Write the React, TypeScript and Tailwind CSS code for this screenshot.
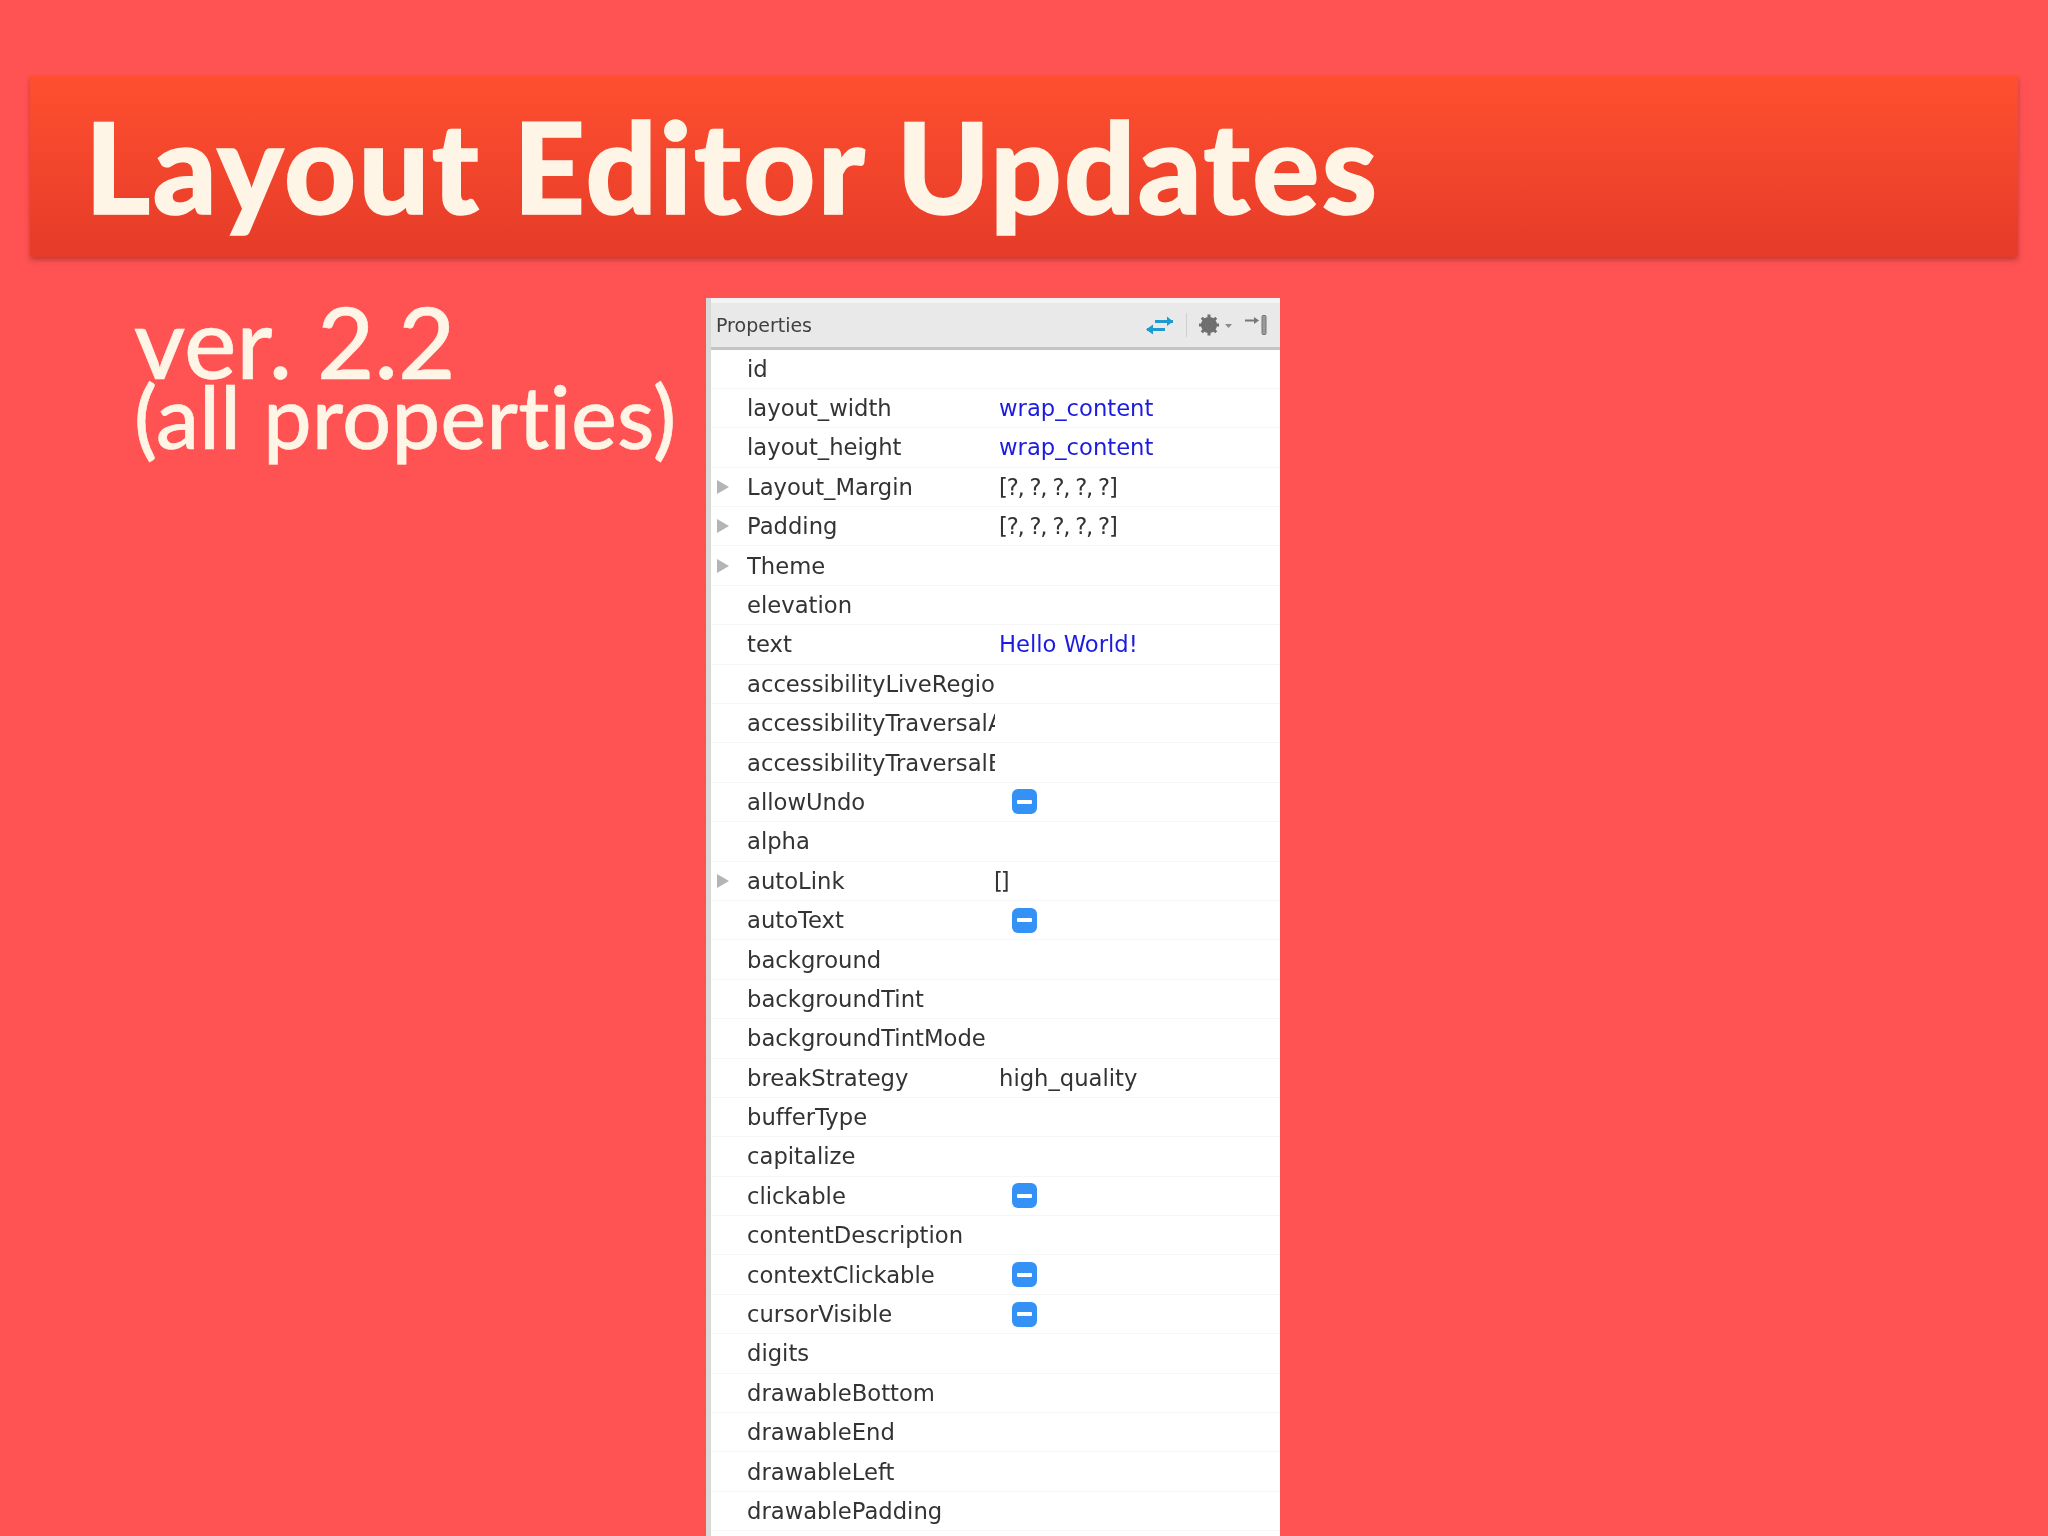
import React from 'react';

type Row = { name: string; value?: string; blue?: boolean; arrow?: boolean; check?: boolean; narrow?: boolean };

const rows: Row[] = [
  { name: 'id' },
  { name: 'layout_width', value: 'wrap_content', blue: true },
  { name: 'layout_height', value: 'wrap_content', blue: true },
  { name: 'Layout_Margin', value: '[?, ?, ?, ?, ?]', arrow: true, narrow: true },
  { name: 'Padding', value: '[?, ?, ?, ?, ?]', arrow: true, narrow: true },
  { name: 'Theme', arrow: true },
  { name: 'elevation' },
  { name: 'text', value: 'Hello World!', blue: true },
  { name: 'accessibilityLiveRegion' },
  { name: 'accessibilityTraversalAfter' },
  { name: 'accessibilityTraversalBefore' },
  { name: 'allowUndo', check: true },
  { name: 'alpha' },
  { name: 'autoLink', value: '[]', arrow: true },
  { name: 'autoText', check: true },
  { name: 'background' },
  { name: 'backgroundTint' },
  { name: 'backgroundTintMode' },
  { name: 'breakStrategy', value: 'high_quality' },
  { name: 'bufferType' },
  { name: 'capitalize' },
  { name: 'clickable', check: true },
  { name: 'contentDescription' },
  { name: 'contextClickable', check: true },
  { name: 'cursorVisible', check: true },
  { name: 'digits' },
  { name: 'drawableBottom' },
  { name: 'drawableEnd' },
  { name: 'drawableLeft' },
  { name: 'drawablePadding' },
];

function SwapIcon() {
  return (
    <svg width="30" height="22" viewBox="0 0 30 22" fill="none" stroke="#1f9ad0" strokeWidth="3">
      <path d="M10 7.5H28" />
      <path d="M22 2.5L28 7.5L22 12" fill="#1f9ad0" stroke="none" />
      <path d="M2 15.5H20" />
      <path d="M8 10.5L1 15.5L8 20.5Z" fill="#1f9ad0" stroke="none" />
    </svg>
  );
}

function GearIcon() {
  return (
    <svg width="36" height="24" viewBox="0 0 36 24" fill="#6f6f6f">
      <circle cx="11" cy="12" r="6" fill="none" stroke="#6f6f6f" strokeWidth="4" />
      <path d="M11 1.5V22.5M1 12H21M3.8 4.8L18.2 19.2M18.2 4.8L3.8 19.2" stroke="#6f6f6f" strokeWidth="3" />
      <path d="M27 11H34L30.5 15Z" fill="#8a8a8a" />
    </svg>
  );
}

function PinIcon() {
  return (
    <svg width="24" height="22" viewBox="0 0 24 22" fill="none">
      <path d="M1 6.5H11" stroke="#777" strokeWidth="2" />
      <path d="M10 3L15 6.5L10 10Z" fill="#777" />
      <rect x="18" y="1.5" width="4" height="19" rx="1" fill="#9a9a9a" stroke="#777" />
    </svg>
  );
}

function PropertyRow({ row }: { row: Row }) {
  const isEmptyList = row.value === '[]';
  return (
    <div className="flex h-[39.4px] shrink-0 items-center border-b border-[#f6f6f6] pl-[6px]">
      <div className="flex w-[30px] shrink-0 items-center">
        {row.arrow && <div className="h-0 w-0 border-y-[7px] border-l-[12px] border-y-transparent border-l-[#b4b4b8]" />}
      </div>
      <div className="w-[248px] shrink-0 overflow-hidden font-medium whitespace-nowrap text-[#333333]">{row.name}</div>
      {row.value && (
        <div
          className={`whitespace-nowrap ${row.blue ? 'text-[#1c1ce0]' : 'text-[#333333]'} ${row.narrow ? 'tracking-[-1.2px]' : ''} ${isEmptyList ? '-ml-[1px] tracking-[-2px]' : 'ml-[4px]'}`}
        >
          {row.value}
        </div>
      )}
      {row.check && (
        <div className="ml-[17px] flex h-[25px] w-[25px] items-center justify-center rounded-[6px] bg-[#3492f7]">
          <div className="h-[4px] w-[15px] rounded-[1px] bg-white" />
        </div>
      )}
    </div>
  );
}

export default function App() {
  return (
    <div className="flex h-[1536px] w-[2048px] flex-col overflow-hidden bg-[#ff5252] pt-[76px] font-['Lato',sans-serif] text-[#fff5e6] [font-variant-ligatures:none]">
      <div className="mx-[30px] flex h-[181px] shrink-0 items-center rounded-b-[3px] bg-gradient-to-b from-[#ff4f30] to-[#e53b28] pl-[55px] shadow-[0_3px_5px_rgba(120,30,30,0.45)]">
        <h1 className="text-[125px] leading-none font-black tracking-[2.4px] whitespace-nowrap [-webkit-text-stroke:1.5px_#fff5e6]">Layout Editor Updates</h1>
      </div>
      <div className="flex min-h-0 flex-1 pt-[41px]">
        <div className="w-[706px] shrink-0 pt-[7px] pl-[134px] font-medium [-webkit-text-stroke:0.6px_#fff5e6]">
          <div className="text-[99px] leading-[72px]">ver. 2.2</div>
          <div className="text-[86px] leading-[78px] tracking-[0.4px] whitespace-nowrap">(all properties)</div>
        </div>
        <div className="flex w-[574px] shrink-0 flex-col overflow-hidden border-l-[5px] border-[#d8d8d6] bg-white font-['DejaVu_Sans',sans-serif] text-[22.7px] blur-[0.5px]">
          <div className="flex h-[51.5px] shrink-0 items-center justify-between border-t-[5px] border-b-[3px] border-t-[#f4f4f4] border-b-[#c4c4c4] bg-[#e9e9ea] pr-[12px] pl-[5px]">
            <span className="text-[19px] font-medium text-[#404040]">Properties</span>
            <div className="flex items-center">
              <SwapIcon />
              <div className="mx-[11px] h-[24px] w-px bg-[#cfcfcf]" />
              <GearIcon />
              <div className="ml-[10px]">
                <PinIcon />
              </div>
            </div>
          </div>
          {rows.map(r => <PropertyRow key={r.name} row={r} />)}
        </div>
      </div>
    </div>
  );
}
